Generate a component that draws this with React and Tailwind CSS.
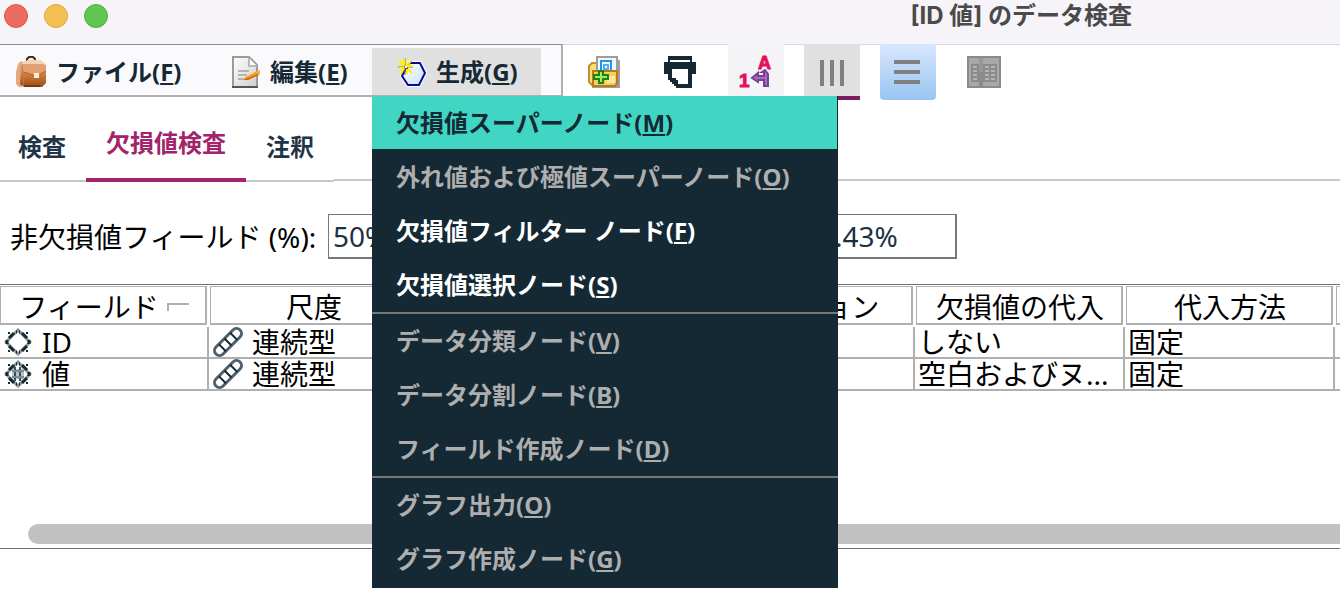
import React, { useState } from 'react';

const menuGroups = [
  [
    { label: '欠損値スーパーノード', hotkey: 'M', enabled: true },
    { label: '外れ値および極値スーパーノード', hotkey: 'O', enabled: false },
    { label: '欠損値フィルター ノード', hotkey: 'F', enabled: true },
    { label: '欠損値選択ノード', hotkey: 'S', enabled: true },
  ],
  [
    { label: 'データ分類ノード', hotkey: 'V', enabled: false },
    { label: 'データ分割ノード', hotkey: 'B', enabled: false },
    { label: 'フィールド作成ノード', hotkey: 'D', enabled: false },
  ],
  [
    { label: 'グラフ出力', hotkey: 'O', enabled: false },
    { label: 'グラフ作成ノード', hotkey: 'G', enabled: false },
  ],
];

const columns = ['フィールド', '尺度', '外れ値', '極値', 'アクション', '欠損値の代入', '代入方法', ''];

const rows = [
  { field: 'ID', numeric: false, measure: '連続型', impute: 'しない', method: '固定' },
  { field: '値', numeric: true, measure: '連続型', impute: '空白およびヌ...', method: '固定' },
];

function Hotkey({ letter }) {
  return (
    <span>
      (<span className="underline decoration-2 underline-offset-2 [text-decoration-skip-ink:none]">{letter}</span>)
    </span>
  );
}

function BriefcaseIcon() {
  return (
    <svg width="32" height="32" viewBox="0 0 32 32" className="shrink-0">
      <defs>
        <linearGradient id="leather" x1="0" y1="0" x2="0" y2="1">
          <stop offset="0" stopColor="#f3c9a4" />
          <stop offset="0.5" stopColor="#cf8248" />
          <stop offset="1" stopColor="#9c4a0c" />
        </linearGradient>
      </defs>
      <path d="M11 5V3l2-2h4l2 2v2" fill="none" stroke="#4a2a18" strokeWidth="2" />
      <path d="M2 8l3-3 3 2-2 24H3l-3-3V16z" fill="#e5a87c" />
      <path d="M5 8l7-4h12l6 5v18l-4 4H8l-4-3z" fill="url(#leather)" />
      <path d="M5 8l7-4h12l6 5v6l-9 5-13-4z" fill="#e3a173" />
      <path d="M5 8l7-4h12l6 5-4-1H10z" fill="#f6d3b4" />
      <path d="M8 16l12 4 10-5" fill="none" stroke="#b0632a" strokeWidth="1" />
      <path d="M6 9l2 21" stroke="#b87a4a" strokeWidth="1" />
      <path d="M8 30h16" stroke="#6e3a16" strokeWidth="2" />
      <rect x="18" y="17" width="5" height="5" fill="#fff0dc" />
    </svg>
  );
}

function EditIcon() {
  return (
    <svg width="32" height="32" viewBox="0 0 32 32" className="shrink-0">
      <defs>
        <linearGradient id="sheet" x1="0" y1="0" x2="1" y2="1">
          <stop offset="0" stopColor="#ffffff" />
          <stop offset="1" stopColor="#cfcfcf" />
        </linearGradient>
      </defs>
      <path d="M3 1h16l8 8v22H3z" fill="url(#sheet)" stroke="#9b9b9b" strokeWidth="2" />
      <path d="M2 31h26" stroke="#55555b" strokeWidth="2" />
      <path d="M19 2v8h8" fill="#fff" stroke="#b9b9b9" strokeWidth="2" />
      <path d="M8 15h11M8 19h9M8 23h5" stroke="#b3b3b3" strokeWidth="2" />
      <path d="M14 22l13-7 3 3-12 6h-5z" fill="#f5a21c" />
      <path d="M15 23l13-5 1 1-11 5h-5z" fill="#e0620c" />
      <path d="M27 15l3-1v3l-2 1z" fill="#f2b35c" />
    </svg>
  );
}

function GenerateIcon() {
  return (
    <svg width="32" height="32" viewBox="0 0 32 32" className="shrink-0">
      <defs>
        <linearGradient id="hex" x1="0" y1="0" x2="1" y2="1">
          <stop offset="0" stopColor="#ffffff" />
          <stop offset="1" stopColor="#c9e2fa" />
        </linearGradient>
      </defs>
      <path d="M13 7h11l5 10-6 12H12L6 20z" fill="none" stroke="#fff" strokeWidth="4" />
      <path d="M13 7h11l5 10-6 12H12L6 20z" fill="url(#hex)" stroke="#0a0a96" strokeWidth="2" />
      <path d="M9 2v17M2 11h15M4 5l12 12M16 5L4 18" stroke="#7d7d22" strokeWidth="1" />
      <path d="M8 2v7M3 12h5M3 4l5 6M12 13l4 4M15 5l-5 5M8 13l-4 5M11 10h6M11 13v5" stroke="#ffef00" strokeWidth="2" />
      <path d="M9 11h2" stroke="#fff" strokeWidth="2" />
    </svg>
  );
}

function AddProjectIcon() {
  return (
    <svg width="32" height="32" viewBox="0 0 32 32">
      <path d="M10 4h22v28H4v-4h6z" fill="#9c9ca9" />
      <path d="M1 10l3-3h5v22H4l-3-3z" fill="#f6dc7c" stroke="#c7902a" strokeWidth="2" />
      <path d="M9 1h20v20H9z" fill="#f4f8fc" stroke="#9d9d9d" strokeWidth="2" />
      <path d="M13 14V5h10v16" fill="#fff" stroke="#1c97f0" strokeWidth="2" />
      <path d="M16 9h4v4h-4z" fill="none" stroke="#55aee9" strokeWidth="2" />
      <path d="M5 15h24v12l-2 3H5z" fill="#f5cf62" stroke="#b97b15" strokeWidth="2" />
      <path d="M19 20h8v7h-8z" fill="#fbe7a4" />
      <path d="M11 15h4v4h5v4h-5v4h-4v-4H6v-4h5z" fill="#9eeb67" stroke="#1d8412" strokeWidth="2" />
    </svg>
  );
}

function PrintIcon() {
  return (
    <svg width="32" height="32" viewBox="0 0 32 32" shapeRendering="crispEdges">
      <path d="M4 0h24v6h4v12h-4v14H12v-2h-2v-2H8v-2H6v-2H4v-6H0V6h4z" fill="#152935" />
      <path d="M6 4h20v2H6z" fill="#fff" />
      <path d="M8 13h16v15H14v-4h-2v-2H8z" fill="#fff" />
    </svg>
  );
}

function RenameIcon() {
  return (
    <svg width="40" height="48" viewBox="-4 -8 40 48" fill="#e60f5c" stroke="#e60f5c">
      <text x="18" y="13" fontFamily="Liberation Sans" fontWeight="700" fontSize="18">A</text>
      <text x="-1" y="31" fontFamily="Liberation Sans" fontWeight="700" fontSize="19">1</text>
      <path d="M25 14l3 4v12h-4v-6h-6v2l-6-4 6-5v3h6v-4h-2z" fill="#a56cb8" stroke="#7b3f96" strokeWidth="2" />
    </svg>
  );
}

function ColumnsIcon() {
  return (
    <svg width="32" height="32" viewBox="0 0 32 32" fill="#808080">
      <path d="M4 4h4v26H4zM14 4h4v26h-4zM24 4h4v26h-4z" />
    </svg>
  );
}

function RowsIcon() {
  return (
    <svg width="32" height="32" viewBox="0 0 32 32" fill="#808080">
      <path d="M2 4h26v4H2zM2 14h26v4H2zM2 24h26v4H2z" />
    </svg>
  );
}

function SplitTableIcon() {
  return (
    <svg width="34" height="32" viewBox="0 0 34 32" shapeRendering="crispEdges">
      <path d="M0 0h34v32H0z" fill="#8b8b8b" />
      <path d="M2 2h30v28H2z" fill="#a8a8a8" />
      <path d="M12 2h4v28h-4zM4 8h10v18H4zM16 8h14v18H16z" fill="#8b8b8b" />
      <path d="M12 2h4v14h-4z" fill="#989898" />
      <path
        d="M6 10h4v2H6zM6 14h4v2H6zM6 18h4v2H6zM6 22h4v2H6zM18 10h4v2h-4zM18 14h4v2h-4zM18 18h4v2h-4zM18 22h4v2h-4zM24 10h4v2h-4zM24 14h4v2h-4zM24 18h4v2h-4zM24 22h4v2h-4z"
        fill="#b4b4b4"
      />
    </svg>
  );
}

function FieldIcon({ numeric }) {
  return (
    <svg width="28" height="28" viewBox="0 0 28 28" className="shrink-0">
      <path d="M14 2l12 12-12 12L2 14z" fill="none" stroke="#8a969d" strokeWidth="3" />
      <path
        d="M10 5L5 10M18 5l5 5M10 23l-5-5M18 23l5-5M3 12v4M25 12v4M12 4h1M15 4h1M12 24h1M15 24h1"
        stroke="#152935"
        strokeWidth="3"
      />
      <path d="M4 4h2v2H4zM22 4h2v2h-2zM4 22h2v2H4zM22 22h2v2h-2z" fill="#152935" />
      {numeric && (
        <>
          <path d="M8 9h12v10H8z" fill="#b9c1c6" />
          <path d="M11 7v14M16 7v14" stroke="#3a505d" strokeWidth="2" />
          <path d="M8 11h12M8 17h12" stroke="#7b8992" strokeWidth="2" />
        </>
      )}
    </svg>
  );
}

function ContinuousIcon() {
  return (
    <svg width="32" height="30" viewBox="0 0 32 30" className="shrink-0" fill="none" stroke="#4c616d" strokeWidth="3">
      <g transform="rotate(-45 16 15)">
        <rect x="-1" y="10" width="34" height="10" rx="5" />
        <path d="M8 10v10M16 10v10M24 10v10" strokeWidth="2" stroke="#152935" />
      </g>
    </svg>
  );
}

function GenerateMenu() {
  return (
    <div role="menu" className="absolute top-full left-0 z-10 w-[466px] bg-[#152935] pr-px pb-0.5">
      {menuGroups.map((group, g) => (
        <div key={g} className={g > 0 ? '-mr-px border-t-2 border-[#777777]' : ''}>
          {group.map((item, i) => (
            <button
              key={item.label}
              role="menuitem"
              disabled={!item.enabled}
              className={`block h-[54px] w-full border-b border-[#152935] pl-6 text-left text-2xl font-bold whitespace-nowrap ${
                g === 0 && i === 0 ? 'bg-[#41d6c3] text-[#152935]' : item.enabled ? 'text-white' : 'text-[#aeaeae]'
              }`}
            >
              {item.label}
              <Hotkey letter={item.hotkey} />
            </button>
          ))}
        </div>
      ))}
    </div>
  );
}

function MenuBar() {
  return (
    <nav className="flex h-[53px] w-[563px] shrink-0 items-start border-t border-r-2 border-b-2 border-t-[#8c8c8c] border-r-[#b0b0b0] border-b-[#b0b0b0] bg-[#fafafc] pt-[3px] text-2xl font-bold text-[#152935]">
      <button className="flex h-[47px] w-[206px] items-center gap-2 pl-4 whitespace-nowrap">
        <BriefcaseIcon />
        <span>ファイル<Hotkey letter="F" /></span>
      </button>
      <button className="flex h-[47px] w-[166px] items-center gap-2 pl-6 whitespace-nowrap">
        <EditIcon />
        <span>編集<Hotkey letter="E" /></span>
      </button>
      <div className="relative h-12">
        <button className="flex h-[47px] w-[169px] items-center gap-2 bg-[#e0e0e0] pl-6 whitespace-nowrap">
          <GenerateIcon />
          <span>生成<Hotkey letter="G" /></span>
        </button>
        <GenerateMenu />
      </div>
    </nav>
  );
}

function ToolBar() {
  const base = '-mt-px flex size-14 items-center justify-center';
  return (
    <div className="flex flex-1 gap-5 border-t border-[#d8d8d8] pl-[13px]">
      <button aria-label="プロジェクトに追加" className={base}><AddProjectIcon /></button>
      <button aria-label="印刷" className={base}><PrintIcon /></button>
      <button aria-label="名前とラベル" className={`${base} bg-[#f4f4f6]`}><RenameIcon /></button>
      <button aria-label="列" className={`${base} border-b-4 border-[#7f1d5c] bg-[#e0e0e0] pt-1`}><ColumnsIcon /></button>
      <button aria-label="行" className={`${base} rounded-sm bg-linear-to-b from-[#d9e7fd] to-[#97c5f1]`}><RowsIcon /></button>
      <button aria-label="分割表示" className={base}><SplitTableIcon /></button>
    </div>
  );
}

export default function App() {
  const [tab, setTab] = useState('欠損値検査');
  const tabs = ['検査', '欠損値検査', '注釈'];

  return (
    <div className="min-h-screen overflow-hidden bg-white font-['Noto_Sans','Noto_Sans_CJK_JP',sans-serif] text-black">
      <header className="flex h-11 items-start bg-[#f6f4f8] pt-1 pl-1">
        <div className="flex gap-4">
          <button aria-label="閉じる" className="size-6 rounded-full border border-[#d8584d] bg-[#ed6a5e]" />
          <button aria-label="しまう" className="size-6 rounded-full border border-[#dda63c] bg-[#f5bf4f]" />
          <button aria-label="拡大" className="size-6 rounded-full border border-[#4fae43] bg-[#61c554]" />
        </div>
        <h1 className="ml-auto pr-52 font-['Inter','Noto_Sans_CJK_JP',sans-serif] text-2xl leading-6 font-bold text-[#4a4a4a]">
          [ID 値] のデータ検査
        </h1>
      </header>

      <div className="flex h-14">
        <MenuBar />
        <ToolBar />
      </div>

      <div role="tablist" className="flex h-[82px] text-2xl font-bold text-[#1f3447]">
        {tabs.map((name, i) => (
          <button
            key={name}
            role="tab"
            aria-selected={tab === name}
            onClick={() => setTab(name)}
            className={`${i === 0 ? 'w-[86px] pr-0.5' : 'px-5'} ${
              tab === name ? 'border-b-4 border-[#a3246b] pt-2 text-[#a3246b]' : 'border-b-2 border-[#c8c8c8] pt-3.5'
            }`}
          >
            {name}
          </button>
        ))}
        <div className="mb-px flex-1 border-b-2 border-[#c8c8c8]" />
      </div>

      <main className="pt-8">
        <div className="flex h-[45px] items-center text-[28px] whitespace-nowrap">
          <label htmlFor="complete-fields" className="w-[328px] pl-2.5">非欠損値フィールド (%):</label>
          <input id="complete-fields" readOnly value="50%" className="h-full w-[162px] border border-r-2 border-b-2 border-[#777777] pl-1 text-[#1c3140]" />
          <input aria-label="レコード (%)" readOnly value="71.43%" className="ml-[305px] h-full w-[162px] border border-r-2 border-b-2 border-[#777777] pl-[7px] text-[#1c3140]" />
        </div>

        <section className="mt-[25px] border-y border-[#6f6f6f]">
          <div className="min-h-[239px] overflow-hidden">
            <table className="w-full min-w-[1445px] table-fixed border-separate border-spacing-0 text-[28px] leading-[30px] whitespace-nowrap">
              <colgroup>
                <col className="w-[209px]" />
                <col className="w-[210px]" />
                <col className="w-[143px]" />
                <col className="w-[143px]" />
                <col className="w-[210px]" />
                <col className="w-[210px]" />
                <col className="w-[210px]" />
                <col />
              </colgroup>
              <thead>
                <tr>
                  {columns.map((name, i) => (
                    <th key={i} className={`pt-px pr-0.5 pb-0.5 font-normal ${i === 0 ? '' : 'pl-px'}`}>
                      <div className="flex h-[39px] items-center justify-center gap-2 border border-r-2 border-b-2 border-[#b0b0b0] pt-1 pl-0.5">
                        {name}
                        {i === 0 && (
                          <svg width="22" height="8" viewBox="0 0 22 8">
                            <path d="M1 8V1h21" fill="none" stroke="#b0b0b0" strokeWidth="2" />
                          </svg>
                        )}
                      </div>
                    </th>
                  ))}
                </tr>
              </thead>
              <tbody>
                {rows.map((row) => (
                  <tr key={row.field} className="h-8 *:border-r-2 *:border-b-2 *:border-[#b0b0b0] *:p-0">
                    <td>
                      <div className="flex items-center gap-2.5 pl-1">
                        <FieldIcon numeric={row.numeric} />
                        {row.field}
                      </div>
                    </td>
                    <td>
                      <div className="flex items-center gap-2 pl-[3px]">
                        <ContinuousIcon />
                        {row.measure}
                      </div>
                    </td>
                    <td />
                    <td />
                    <td />
                    <td><div className="pl-[3px]">{row.impute}</div></td>
                    <td><div className="pl-[3px]">{row.method}</div></td>
                    <td />
                  </tr>
                ))}
              </tbody>
            </table>
          </div>
          <div className="mb-1 ml-7 h-5 rounded-l-full bg-[#c1c1c1]" />
        </section>
      </main>
    </div>
  );
}
